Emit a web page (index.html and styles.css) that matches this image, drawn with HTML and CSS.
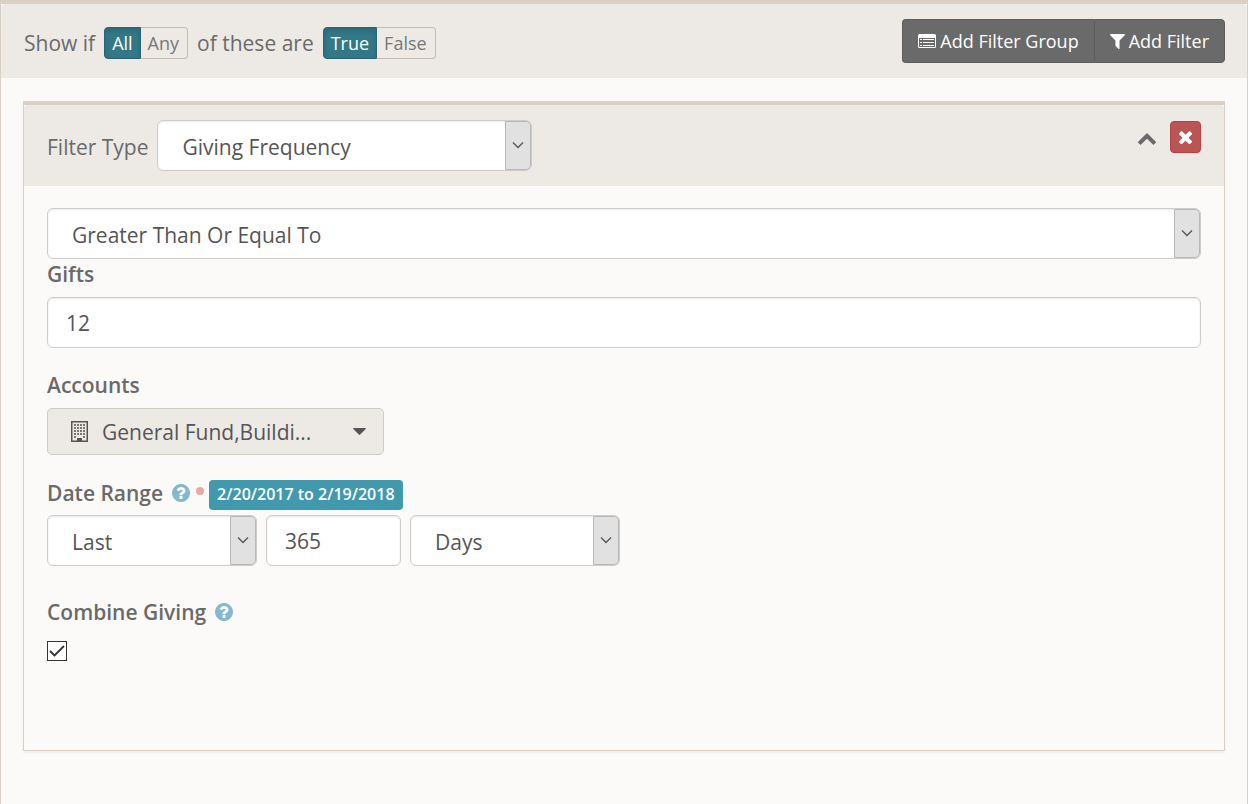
FILE: index.html
```html
<!DOCTYPE html>
<html lang="en">
<head>
<meta charset="utf-8">
<title>Data View Filters</title>
<link rel="stylesheet" href="styles.css">
</head>
<body>
<svg class="sprite" aria-hidden="true">
  <symbol id="help" viewBox="128 128 1536 1536"><path d="M1024 1376v-192q0-14-9-23t-23-9h-192q-14 0-23 9t-9 23v192q0 14 9 23t23 9h192q14 0 23-9t9-23zm256-672q0-88-55.500-163t-138.500-116-170-41q-243 0-371 213-15 24 8 42l132 100q7 6 19 6 16 0 25-12 53-68 86-92 34-24 86-24 48 0 85.500 26t37.500 59q0 38-20 61t-68 45q-63 28-115.500 86.500t-52.500 125.500v36q0 14 9 23t23 9h192q14 0 23-9t9-23q0-19 21.500-49.500t54.500-49.500q32-18 49-28.500t46-35 44.500-48 28-60.500 12.500-81zm384 192q0 209-103 385.500t-279.500 279.500-385.500 103-385.500-103-279.500-279.500-103-385.500 103-385.500 279.500-279.500 385.500-103 385.500 103 279.500 279.500 103 385.500z"/></symbol>
  <symbol id="arrow" viewBox="0 0 12 8"><path d="M1 1.500l5 5 5-5" fill="none" stroke="#555" stroke-width="1.300"/></symbol>
</svg>
<main class="group">
  <header class="group-header">
    <div class="sentence">
      <span>Show if</span>
      <div class="toggle"><button type="button" class="toggle-btn active" aria-pressed="true">All</button><button type="button" class="toggle-btn" aria-pressed="false">Any</button></div>
      <span>of these are</span>
      <div class="toggle"><button type="button" class="toggle-btn active" aria-pressed="true">True</button><button type="button" class="toggle-btn" aria-pressed="false">False</button></div>
    </div>
    <div class="actions">
      <button type="button" class="action">
        <svg width="18" height="14" viewBox="0 0 18 14" fill="#fff"><path fill-rule="evenodd" d="M1.500 0h15A1.500 1.500 0 0 1 18 1.500v11a1.500 1.500 0 0 1-1.500 1.500h-15A1.500 1.500 0 0 1 0 12.500v-11A1.500 1.500 0 0 1 1.500 0zM1 4v8.500c0 .3.200.5.500.5h15c.3 0 .5-.2.5-.5V4z"/><path d="M2 5h2v1H2zM5 5h11v1H5zM2 8h2v1H2zM5 8h11v1H5zM2 11h2v1H2zM5 11h11v1H5z"/></svg>
        Add Filter Group</button>
      <button type="button" class="action">
        <svg width="15" height="15" viewBox="190 256 1412 1408" fill="#fff"><path d="M1595 295q17 41-14 70l-493 493v742q0 42-39 59-13 5-25 5-27 0-45-19l-256-256q-19-19-19-45v-486l-493-493q-31-29-14-70 17-39 59-39h1280q42 0 59 39z"/></svg>
        Add Filter</button>
    </div>
  </header>
  <section class="filter">
    <header class="filter-header">
      <div class="type">
        <label for="filter-type">Filter Type</label>
        <div class="select type-select"><select id="filter-type"><option>Giving Frequency</option></select><span class="drop"><svg width="12" height="8"><use href="#arrow"/></svg></span></div>
      </div>
      <div class="tools">
        <button type="button" class="collapse" aria-label="Collapse filter"><svg width="18" height="12" viewBox="90 480 1612 1036" fill="#6a6a6a"><path d="M1683 1331l-166 165q-19 19-45 19t-45-19l-531-531-531 531q-19 19-45 19t-45-19l-166-165q-19-19-19-45.500t19-45.500l742-741q19-19 45-19t45 19l742 741q19 19 19 45.500t-19 45.500z"/></svg></button>
        <button type="button" class="remove" aria-label="Remove filter"><svg width="13" height="13" viewBox="302 350 1188 1188" fill="#fff"><path d="M1490 1322q0 40-28 68l-136 136q-28 28-68 28t-68-28l-294-294-294 294q-28 28-68 28t-68-28l-136-136q-28-28-28-68t28-68l294-294-294-294q-28-28-28-68t28-68l136-136q28-28 68-28t68 28l294 294 294-294q28-28 68-28t68 28l136 136q28 28 28 68t-28 68l-294 294 294 294q28 28 28 68z"/></svg></button>
      </div>
    </header>
    <div class="filter-body">
      <div class="select"><select aria-label="Comparison"><option>Greater Than Or Equal To</option></select><span class="drop"><svg width="12" height="8"><use href="#arrow"/></svg></span></div>
      <div class="field gifts">
        <label for="gifts">Gifts</label>
        <input class="text" id="gifts" type="text" value="12">
      </div>
      <div class="field">
        <label for="accounts">Accounts</label>
        <button type="button" class="picker" id="accounts">
          <svg width="17" height="21" viewBox="0 0 17 21"><path fill="#555" fill-rule="evenodd" d="M0 0h17v21H0zM1.500 1.500v18H6V17h5v2.500h4.500v-18z"/><path fill="#777" d="M3 3h2v2H3zM6 3h2v2H6zM9 3h2v2H9zM12 3h2v2h-2zM3 6h2v2H3zM6 6h2v2H6zM9 6h2v2H9zM12 6h2v2h-2zM3 9h2v2H3zM6 9h2v2H6zM9 9h2v2H9zM12 9h2v2h-2zM3 12h2v2H3zM6 12h2v2H6zM9 12h2v2H9zM12 12h2v2h-2zM3 15h2v2H3zM12 15h2v2h-2z"/></svg>
          <span class="picked">General Fund,Buildi...</span>
          <svg width="13" height="7" viewBox="0 0 13 7" fill="#555"><path d="M.7 0h11.600q.9.300.4 1L7.200 6.600q-.7.600-1.400 0L.3 1Q-.2.300.7 0z"/></svg>
        </button>
      </div>
      <div class="field">
        <div class="label-row dated">
          <label for="range-kind">Date Range</label>
          <a class="help" href="#help-range" aria-label="Help for date range"><svg width="18" height="18"><use href="#help"/></svg></a>
          <span class="required"></span>
          <span class="badge">2/20/2017 to 2/19/2018</span>
        </div>
        <div class="range">
          <div class="select unit"><select id="range-kind"><option>Last</option></select><span class="drop"><svg width="12" height="8"><use href="#arrow"/></svg></span></div>
          <input class="text count" type="text" value="365" aria-label="Number of units">
          <div class="select unit"><select aria-label="Unit"><option>Days</option></select><span class="drop"><svg width="12" height="8"><use href="#arrow"/></svg></span></div>
        </div>
      </div>
      <div class="field combine">
        <div class="label-row">
          <label for="combine">Combine Giving</label>
          <a class="help" href="#help-combine" aria-label="Help for combine giving"><svg width="18" height="18"><use href="#help"/></svg></a>
        </div>
        <span class="check"><input type="checkbox" id="combine" checked><svg width="16" height="12" viewBox="0 0 16 12"><path d="M1 6l4.500 4.500L15 1" fill="none" stroke="#333" stroke-width="1.800"/></svg></span>
      </div>
    </div>
  </section>
</main>
</body>
</html>
```
FILE: styles.css
```css
* { box-sizing: border-box; }
body {
  margin: 0;
  background: #fbfaf8;
  color: #6a6a6a;
  font: 21px/30px "Open Sans", sans-serif;
}
button, input, select { font: inherit; color: #555; margin: 0; }
svg { display: block; flex: none; }
.sprite { position: absolute; width: 0; height: 0; }
.group {
  min-height: 100vh;
  border: 1px solid #d8d0c7;
  border-width: 4px 1px 0;
  padding-bottom: 48px;
}
.group-header {
  display: flex;
  justify-content: space-between;
  align-items: flex-start;
  padding: 15px 22px;
  background: #edeae6;
  border-radius: 4px 4px 0 0;
}
.sentence { display: flex; gap: 9px; align-items: center; padding: 8px 0 0 1px; }
.toggle { display: flex; }
.toggle-btn {
  height: 32px;
  padding: 0 8px 0 7px;
  border: 1px solid #c4bbb0;
  border-left: 0;
  border-radius: 0 4px 4px 0;
  background: transparent;
  color: #777;
  font-size: 18px;
  line-height: 30px;
}
.toggle-btn.active {
  padding: 0 7px;
  border: 1px solid #2a6472;
  border-radius: 4px 0 0 4px;
  background: #327887;
  box-shadow: inset 0 3px 5px rgba(0, 0, 0, .125);
  color: #fff;
}
.actions { display: flex; }
.action {
  display: flex;
  align-items: center;
  gap: 4px;
  height: 44px;
  padding: 0 15px;
  border: 1px solid #5d5d5d;
  background: #6a6a6a;
  color: #fff;
  font-size: 18px;
}
.action:first-child { border-radius: 4px 0 0 4px; border-right: 0; }
.action:last-child { border-radius: 0 4px 4px 0; }
.filter {
  margin: 23px 22px 0;
  border: 1px solid #d8d0c7;
  border-top-width: 4px;
  box-shadow: 0 2px 2px rgba(0, 0, 0, .05);
}
.filter-header {
  display: flex;
  justify-content: space-between;
  align-items: flex-start;
  padding: 15px 23px;
  background: #edeae6;
  border-radius: 4px 4px 0 0;
}
.type { display: flex; align-items: center; gap: 9px; }
.type label { padding-top: 3px; }
.type-select { width: 375px; }
.tools { display: flex; gap: 14px; align-items: center; padding-top: 1px; }
.collapse { display: flex; padding: 4px 0 0; border: 0; background: none; }
.remove {
  display: flex;
  align-items: center;
  justify-content: center;
  width: 31px;
  height: 32px;
  padding: 1px 0 0;
  border: 1px solid #b24444;
  border-radius: 4px;
  background: #bb5454;
}
.filter-body { padding: 22px 23px 89px; }
.select { position: relative; }
.select select, .text {
  display: block;
  width: 100%;
  height: 51px;
  border: 1px solid #ccc;
  border-radius: 6px;
  background: #fff;
  box-shadow: inset 0 1px 2px rgba(0, 0, 0, .09);
}
.select select { appearance: none; padding: 3px 40px 0 24px; }
.text { padding: 0 18px; }
.drop {
  position: absolute;
  top: 1px;
  right: 1px;
  bottom: 1px;
  width: 26px;
  display: flex;
  align-items: center;
  justify-content: center;
  padding-bottom: 2px;
  border: 1px solid #b8b8b8;
  border-radius: 0 5px 5px 0;
  background: #e1e1e1;
  pointer-events: none;
}
.field { margin-bottom: 22px; }
.field label { display: block; font-weight: 600; }
.gifts label { margin-bottom: 8px; }
.picker {
  display: flex;
  align-items: center;
  width: 337px;
  height: 47px;
  margin-top: 8px;
  padding: 0 17px 0 23px;
  border: 1px solid #ccc;
  border-radius: 5px;
  background: #edeae6;
}
.picked {
  flex: 1;
  margin-left: 14px;
  white-space: nowrap;
  text-align: left;
}
.label-row { display: flex; align-items: center; height: 38px; }
.dated { padding-bottom: 6px; }
.help { margin-left: 9px; color: #84b8cf; fill: currentColor; }
.required { width: 8px; height: 8px; margin: 0 5px 4px 6px; border-radius: 50%; background: #eca8a8; }
.badge {
  height: 30px;
  margin-top: 4px;
  padding: 0 8px;
  border-radius: 4px;
  background: #4099ad;
  color: #fff;
  font-size: 16px;
  font-weight: 600;
  line-height: 29px;
}
.range { display: flex; gap: 9px; }
.unit { width: 210px; }
.count { width: 135px; }
.combine { margin: 27px 0 0; }
.check { position: relative; display: block; width: 20px; height: 20px; margin-top: 10px; }
.check input {
  display: block;
  appearance: none;
  width: 20px;
  height: 20px;
  border: 1px solid #333;
  background: #fff;
}
.check svg { position: absolute; top: 4px; left: 2px; pointer-events: none; }
.check input:not(:checked) + svg { display: none; }
```
